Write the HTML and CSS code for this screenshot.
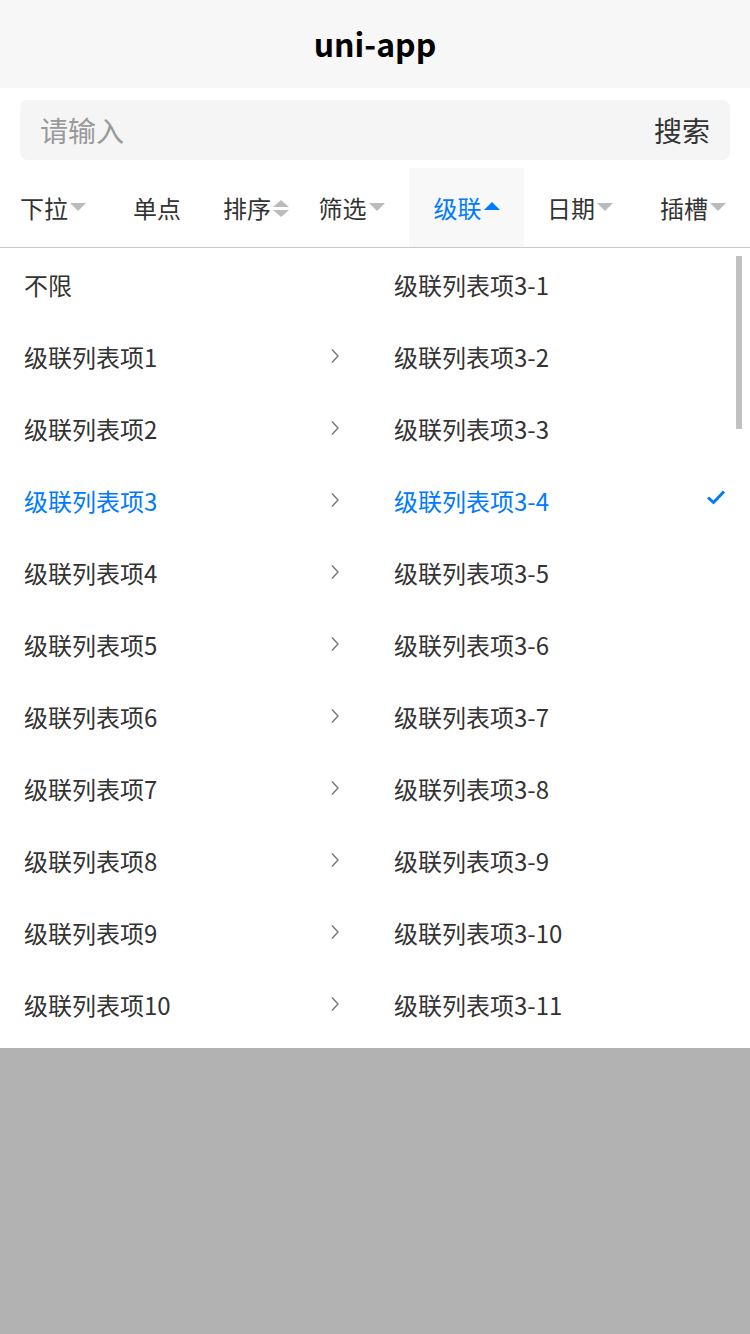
FILE: index.html
```html
<!DOCTYPE html>
<html lang="zh-CN">
<head>
    <meta charset="UTF-8">
    <meta name="viewport" content="width=device-width, initial-scale=1.0">
    <title>uni-app</title>
    <link rel="stylesheet" href="styles.css">
</head>
<body>
    <div class="navbar">uni-app</div>

    <div class="search">
        <div class="search-box">
            <span class="placeholder">请输入</span>
            <span class="search-btn">搜索</span>
        </div>
    </div>

    <div class="tabs">
        <div class="tab"><span>下拉</span><i class="arrow-down"></i></div>
        <div class="tab"><span>单点</span></div>
        <div class="tab"><span>排序</span><i class="sort"><b class="arrow-up"></b><b class="arrow-down"></b></i></div>
        <div class="tab tab-filter"><span>筛选</span><i class="arrow-down"></i></div>
        <div class="tab active"><span>级联</span><i class="arrow-up"></i></div>
        <div class="tab"><span>日期</span><i class="arrow-down"></i></div>
        <div class="tab"><span>插槽</span><i class="arrow-down"></i></div>
    </div>

    <div class="panel">
        <ul class="col col-left">
            <li>不限</li>
            <li>级联列表项1 <svg class="chevron" viewBox="0 0 10 16"><path d="M2 1.5 L8 8 L2 14.5"/></svg></li>
            <li>级联列表项2 <svg class="chevron" viewBox="0 0 10 16"><path d="M2 1.5 L8 8 L2 14.5"/></svg></li>
            <li class="on">级联列表项3 <svg class="chevron" viewBox="0 0 10 16"><path d="M2 1.5 L8 8 L2 14.5"/></svg></li>
            <li>级联列表项4 <svg class="chevron" viewBox="0 0 10 16"><path d="M2 1.5 L8 8 L2 14.5"/></svg></li>
            <li>级联列表项5 <svg class="chevron" viewBox="0 0 10 16"><path d="M2 1.5 L8 8 L2 14.5"/></svg></li>
            <li>级联列表项6 <svg class="chevron" viewBox="0 0 10 16"><path d="M2 1.5 L8 8 L2 14.5"/></svg></li>
            <li>级联列表项7 <svg class="chevron" viewBox="0 0 10 16"><path d="M2 1.5 L8 8 L2 14.5"/></svg></li>
            <li>级联列表项8 <svg class="chevron" viewBox="0 0 10 16"><path d="M2 1.5 L8 8 L2 14.5"/></svg></li>
            <li>级联列表项9 <svg class="chevron" viewBox="0 0 10 16"><path d="M2 1.5 L8 8 L2 14.5"/></svg></li>
            <li>级联列表项10 <svg class="chevron" viewBox="0 0 10 16"><path d="M2 1.5 L8 8 L2 14.5"/></svg></li>
        </ul>
        <ul class="col col-right">
            <li>级联列表项3-1</li>
            <li>级联列表项3-2</li>
            <li>级联列表项3-3</li>
            <li class="on">级联列表项3-4 <svg class="check" viewBox="0 0 20 16"><path d="M2 8.5 L7.5 13.5 L18 2.5"/></svg></li>
            <li>级联列表项3-5</li>
            <li>级联列表项3-6</li>
            <li>级联列表项3-7</li>
            <li>级联列表项3-8</li>
            <li>级联列表项3-9</li>
            <li>级联列表项3-10</li>
            <li>级联列表项3-11</li>
        </ul>
        <div class="scroll-thumb"></div>
    </div>

    <div class="mask"></div>
</body>
</html>
```

FILE: styles.css
```css
html, body {
    height: 100%;
}
body {
    margin: 0;
    display: flex;
    flex-direction: column;
    font-family: "Noto Sans CJK SC", "Noto Sans", sans-serif;
    color: #333;
    background-color: #fff;
}
.navbar {
    height: 86px;
    padding-bottom: 2px;
    flex: none;
    display: flex;
    align-items: center;
    justify-content: center;
    background-color: #f7f7f7;
    font-size: 32px;
    font-weight: bold;
    color: #000;
}
.search {
    flex: none;
    padding: 12px 20px 8px;
}
.search-box {
    height: 60px;
    padding: 0 20px;
    display: flex;
    align-items: center;
    justify-content: space-between;
    background-color: #f5f5f5;
    border-radius: 8px;
    font-size: 28px;
}
.search-box .placeholder {
    color: #999;
}
.search-box .search-btn {
    color: #333;
}
.tabs {
    flex: none;
    height: 79px;
    display: grid;
    grid-template-columns: 106px 102px 96px 105px 115px 112px 114px;
    border-bottom: 1px solid #c8c8c8;
}
.tab {
    display: flex;
    align-items: center;
    justify-content: center;
    font-size: 24px;
    color: #333;
}
.tab-filter {
    padding-right: 10px;
}
.tab.active {
    background-color: #f8f8f8;
    color: #007aff;
}
.arrow-down, .arrow-up {
    display: block;
    width: 0;
    height: 0;
    border-left: 8px solid transparent;
    border-right: 8px solid transparent;
    margin-left: 2px;
}
.arrow-down {
    border-top: 8px solid #bbb;
}
.arrow-up {
    border-bottom: 8px solid #bbb;
}
.tab.active .arrow-up {
    border-bottom-color: #007aff;
    margin-top: -4px;
}
.tab > .arrow-down {
    margin-top: -2px;
}
.sort {
    display: flex;
    flex-direction: column;
    gap: 3px;
    margin-top: 2px;
}
.sort .arrow-up {
    border-bottom-width: 7px;
}
.sort .arrow-down {
    border-top-width: 7px;
}
.panel {
    position: relative;
    flex: none;
    height: 800px;
    display: flex;
    overflow: hidden;
    background-color: #fff;
}
.col {
    list-style: none;
    margin: 0;
    padding: 0;
}
.col li {
    height: 72px;
    display: flex;
    align-items: center;
    justify-content: space-between;
    font-size: 24px;
    color: #333;
}
.col li.on {
    color: #007aff;
}
.col-left {
    width: 370px;
}
.col-left li {
    padding: 0 30px 0 24px;
}
.col-right {
    flex: 1;
}
.col-right li {
    padding: 0 24px 0 24px;
}
.chevron {
    width: 10px;
    height: 16px;
    fill: none;
    stroke: #777;
    stroke-width: 1.4;
}
.check {
    width: 20px;
    height: 16px;
    fill: none;
    stroke: #007aff;
    stroke-width: 3;
    margin-top: -6px;
}
.scroll-thumb {
    position: absolute;
    right: 8px;
    top: 8px;
    width: 6px;
    height: 173px;
    background-color: #c1c1c1;
}
.mask {
    flex: 1;
    background-color: #b2b2b2;
}
```
